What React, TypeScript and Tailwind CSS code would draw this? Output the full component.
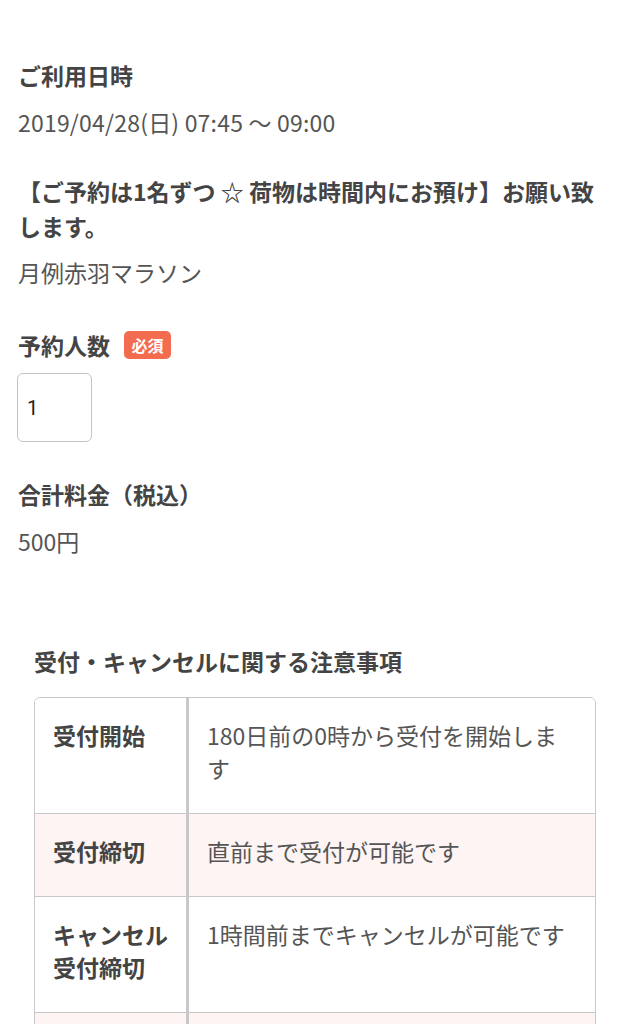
import React from 'react';

const rows = [
  { label: ['受付開始'], value: '180日前の0時から受付を開始します', pink: false },
  { label: ['受付締切'], value: '直前まで受付が可能です', pink: true },
  { label: ['キャンセル', '受付締切'], value: '1時間前までキャンセルが可能です', pink: false },
  { label: ['\u00a0'], value: '', pink: true },
];

export default function App() {
  return (
    <div
      className="bg-white min-h-screen px-[18px] pt-[58px] pb-10 text-[23px] text-[#555]"
      style={{ fontFamily: '"Noto Sans CJK JP", "Noto Sans", sans-serif' }}
    >
      <div className="font-bold text-[#444] leading-[34px]">ご利用日時</div>
      <div className="mt-[13px] leading-[34px] tracking-[0.2px]">2019/04/28(日) 07:45 〜 09:00</div>

      <p className="mt-[35px] font-bold text-[#444] leading-[35px]">
        【ご予約は1名ずつ ☆ 荷物は時間内にお預け】お願い致します。
      </p>
      <div className="mt-[11px] leading-[34px]">月例赤羽マラソン</div>

      <div className="mt-[39px] flex items-center leading-[34px]">
        <span className="font-bold text-[#444]">予約人数</span>
        <span className="ml-[14px] flex h-[28px] w-[47px] items-center justify-center rounded-[5px] bg-[#f36c50] text-[16px] font-bold leading-none text-white">
          必須
        </span>
      </div>
      <div
        className="mt-[11px] -ml-px flex h-[69px] w-[75px] items-center rounded-[6px] border-[1.5px] border-[#c4c4c4] pl-[9px] text-[20px] text-[#222]"
        style={{ fontFamily: 'Roboto, "Liberation Sans", sans-serif' }}
      >
        1
      </div>

      <div className="mt-[35px] font-bold text-[#444] leading-[34px]">合計料金（税込）</div>
      <div className="mt-[13px] leading-[34px]">500円</div>

      <section className="mt-[86px] px-[16px]">
        <h2 className="font-bold text-[#444] leading-[34px]">受付・キャンセルに関する注意事項</h2>
        <div className="mt-[19px] overflow-hidden rounded-t-[6px] border-[1.5px] border-[#c8c8c8]">
          {rows.map((r, i) => (
            <div
              key={i}
              className={`flex leading-[33px] ${i > 0 ? 'border-t-[1.5px] border-[#c8c8c8]' : ''} ${r.pink ? 'bg-[#fdf4f3]' : 'bg-white'}`}
            >
              <div className="w-[154px] shrink-0 border-r-[3px] border-[#c8c8c8] px-[18px] pt-[21px] pb-[28px] font-bold text-[#444]">
                {r.label.map((l, j) => (
                  <div key={j}>{l}</div>
                ))}
              </div>
              <div className="flex-1 pt-[21px] pb-[28px] pl-[18px] pr-[16px]">{r.value}</div>
            </div>
          ))}
        </div>
      </section>
    </div>
  );
}
